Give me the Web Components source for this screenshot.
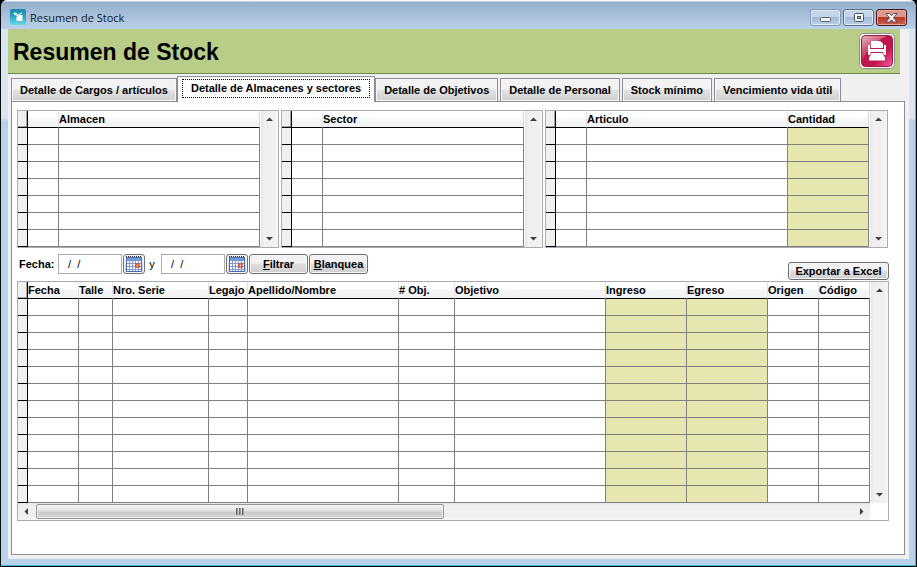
<!DOCTYPE html>
<html lang="es">
<head>
<meta charset="utf-8">
<title>Resumen de Stock</title>
<style>
  body { margin: 0; background: #000; font: 11px/13px "Liberation Sans", Arial, sans-serif; color: #000; }
  .lists { display: grid; grid-template-columns: 262fr 262fr 343fr; gap: 2px; margin-right: 1px; }
</style>
</head>
<body>
<app-window caption="Resumen de Stock">
  <form-header>Resumen de Stock</form-header>
  <tab-strip active="1" tabs="Detalle de Cargos / artículos|Detalle de Almacenes y sectores|Detalle de Objetivos|Detalle de Personal|Stock mínimo|Vencimiento vida útil">
    <div class="lists">
      <data-grid label="Almacenes" rows="7" columns='[["",31],["Almacen",0]]'></data-grid>
      <data-grid label="Sectores" rows="7" columns='[["",31],["Sector",0]]'></data-grid>
      <data-grid label="Artículos" rows="7" columns='[["",31],["Articulo",0],["Cantidad",81,1]]'></data-grid>
    </div>
    <filter-bar></filter-bar>
    <data-grid label="Movimientos" rows="12" hscroll columns='[["Fecha",51],["Talle",34],["Nro. Serie",96],["Legajo",39],["Apellido/Nombre",151],["# Obj.",56],["Objetivo",0],["Ingreso",81,1],["Egreso",81,1],["Origen",51],["Código",51]]'></data-grid>
  </tab-strip>
</app-window>

<script>
class BaseElement extends HTMLElement {
  connectedCallback() {
    if (this.shadowRoot) return;
    this.attachShadow({ mode: "open" }).innerHTML =
      "<style>*{box-sizing:border-box}button{font:inherit;color:inherit;margin:0;padding:0}</style>" + this.render();
  }
}

customElements.define("app-window", class extends BaseElement {
  render() {
    return `<style>
      :host { display: flex; flex-direction: column; box-sizing: border-box; min-height: 100vh;
        border: solid #0b0b0d; border-width: 0 1px 1px; border-radius: 7px 7px 0 0; overflow: hidden;
        background: linear-gradient(#d9e6f4 0 118px, #b9d1ea 121px); }
      .inner { flex: 1; display: flex; flex-direction: column; border: solid #35bfdc; border-width: 0 1px 1px 0; }
      .bar { height: 29px; display: flex; align-items: center; padding: 1px 8px 0 9px;
        background: linear-gradient(#f4f8fc 0 1px, #93adca 2px, #a3bbd7 12px, #b9d1ea); }
      .bar svg.logo { width: 16px; height: 16px; margin-top: 4px; }
      .cap { flex: 1; margin: 5px 0 0 4px; font: 11px/16px "Open Sans", "Noto Sans", sans-serif; color: #101820; }
      .ctl { display: flex; gap: 2px; margin-top: 5px; }
      .ctl button { width: 31px; height: 17px; display: grid; place-items: center; border: 1px solid #5c6f88; border-radius: 3px;
        background: linear-gradient(#c3d5e9 0 45%, #a3bbd6 50%, #b9d0e8); box-shadow: inset 0 0 0 1px #dfeaf6; }
      .ctl button.min { border-color: #8499b3; }
      .ctl button.min svg { margin-top: 3px; }
      .ctl button.close { border-color: #4b1b22; box-shadow: inset 0 0 0 1px #e3a59c;
        background: linear-gradient(#dc9a8c 0 45%, #b93a26 50%, #c9604a); }
      .body { flex: 1; display: flex; flex-direction: column; margin: 0 6px 6px 7px; background: #f0f0f0; }
    </style>
    <div class="inner">
      <div class="bar">
        <svg class="logo" viewBox="0 0 16 16" aria-hidden="true">
          <defs><linearGradient id="g" x2="0" y2="1"><stop stop-color="#1d87a8"/><stop offset=".5" stop-color="#25a7c5"/><stop offset="1" stop-color="#6fdbe5"/></linearGradient></defs>
          <rect width="16" height="16" rx="2" fill="url(#g)"/>
          <path d="M3 4 6 3.500 8 6h4.500v6H6.500V7.500Z" fill="#fff"/><path d="M8.500 5.500 12 4" stroke="#fff"/><path d="m5.500 6 2 2" stroke="#25a7c5"/>
        </svg>
        <span class="cap">${this.getAttribute("caption")}</span>
        <div class="ctl">
          <button class="min" aria-label="Minimizar"><svg width="13" height="7"><rect x="1.500" y="1.500" width="10" height="4" rx="1" fill="#f4f4f4" stroke="#5c6270"/></svg></button>
          <button aria-label="Maximizar"><svg width="12" height="10"><rect x="1.500" y=".5" width="9" height="8" rx="1" fill="#f7f7f7" stroke="#4d5360"/><rect x="4.500" y="3.500" width="3" height="2" fill="#a7bfda" stroke="#4d5360"/></svg></button>
          <button class="close" aria-label="Cerrar"><svg width="13" height="10"><path d="M1 .5h3.500l2 2.200 2-2.200H12L8.500 4.800 12 9H8.500l-2-2.200-2 2.200H1l3.500-4.200Z" fill="#fafafa" stroke="#53525c"/></svg></button>
        </div>
      </div>
      <div class="body"><slot></slot></div>
    </div>`;
  }
});

customElements.define("form-header", class extends BaseElement {
  render() {
    return `<style>
      :host { display: flex; align-items: center; box-sizing: border-box; height: 45px; margin-right: 9px; padding: 0 5px;
        background: #b8cd87; border-bottom: 1px solid #6f8b42; }
      h1 { flex: 1; margin: 0; padding-top: 2px; font: bold 23px/28px "Liberation Sans", Arial, sans-serif; }
      button { width: 36px; height: 36px; border: 0; background: none; }
      svg { display: block; }
    </style>
    <h1><slot></slot></h1>
    <button aria-label="Imprimir"><svg width="36" height="36" viewBox="0 0 36 36">
      <defs>
        <linearGradient id="p" x2="1" y2="1"><stop stop-color="#c96a83"/><stop offset=".3" stop-color="#bd1746"/><stop offset=".65" stop-color="#c4144e"/><stop offset="1" stop-color="#ef62a0"/></linearGradient>
        <linearGradient id="s" x2=".4" y2="1"><stop stop-color="#fff" stop-opacity=".5"/><stop offset="1" stop-color="#fff" stop-opacity=".05"/></linearGradient>
      </defs>
      <rect x=".5" y=".5" width="35" height="35" rx="4" fill="#fff" stroke="#8c8c8c"/>
      <rect x="2.500" y="2.500" width="31" height="31" rx="4" fill="url(#p)" stroke="#9d1640"/>
      <path d="M3 28V7q0-4 4-4h21Q12 9 3 28Z" fill="url(#s)"/>
      <path d="M12 8h9l3 2.500V15H12Z" fill="#fff"/>
      <path d="M9 12h2v4h14v-4h2v10h-2l-1-3H12l-1 3H9Z" fill="#fff"/>
      <path d="M12.500 20h11l2.500 5v2.500H10V25Z" fill="#fff"/>
    </svg></button>`;
  }
});

customElements.define("tab-strip", class extends BaseElement {
  render() {
    const active = +this.getAttribute("active");
    const tabs = this.getAttribute("tabs").split("|").map((t, i) =>
      `<button role="tab" aria-selected="${i === active}"><span>${t}</span></button>`).join("");
    return `<style>
      :host { flex: 1; display: flex; flex-direction: column; margin: 2px 4px 4px 3px; }
      .tabs { display: flex; align-items: flex-end; gap: 2px; height: 26px; margin-bottom: -1px; font-weight: bold; }
      button { height: 24px; padding: 0 8px; border: 1px solid #8b8d9b; white-space: nowrap;
        background: linear-gradient(#f3f3f3 0 45%, #e3e3e3 50%, #cfcfcf); box-shadow: inset 0 0 0 1px #f6f6f6; }
      button[aria-selected=true] { height: 26px; margin: 0 -2px; padding: 0 4px 3px; border-bottom: 0; background: #fff; box-shadow: none; position: relative; }
      [aria-selected=true] span { display: block; padding: 2px 8px; border: 1px dotted #000; }
      .page { flex: 1; padding: 8px 15px 8px 5px; border: 1px solid #8b8d9b; background: #fff; }
    </style>
    <div class="tabs" role="tablist">${tabs}</div>
    <div class="page" role="tabpanel"><slot></slot></div>`;
  }
});

customElements.define("scroll-bar", class extends BaseElement {
  render() {
    const h = this.hasAttribute("horizontal");
    const arrow = d => `<svg width="7" height="7" viewBox="0 0 7 7"><path d="${d}" fill="#404040"/></svg>`;
    return `<style>
      :host { display: flex; box-sizing: border-box; flex-direction: ${h ? "row" : "column"}; ${h ? "height" : "width"}: 17px;
        background: linear-gradient(${h ? "180deg" : "90deg"}, #e5e5e5, #f0f0f0 3px 13px, #f7f7f7); }
      button { flex: none; width: 17px; height: 17px; display: grid; place-items: center; border: 0; background: none; }
      .track { flex: 1; display: flex; padding: 1px; }
      .thumb { width: 50%; display: flex; gap: 1px; align-items: center; justify-content: center; border: 1px solid #979797; border-radius: 2px;
        background: linear-gradient(#f3f3f3, #e2e2e2 48%, #c9c9c9 52%, #d6d6d6); box-shadow: inset 0 0 0 1px #f0f0f0; }
      i { width: 2px; height: 7px; background: linear-gradient(90deg, #555, #aaa); }
    </style>
    <button aria-label="${h ? "Izquierda" : "Arriba"}">${arrow(h ? "M5 0v7L1.500 3.500Z" : "M0 5h7L3.500 1.500Z")}</button>
    <div class="track">${h ? '<div class="thumb"><i></i><i></i><i></i></div>' : ""}</div>
    <button aria-label="${h ? "Derecha" : "Abajo"}">${arrow(h ? "M2 0v7l3.500-3.500Z" : "M0 2h7L3.500 5.500Z")}</button>`;
  }
});

customElements.define("data-grid", class extends BaseElement {
  render() {
    const cols = JSON.parse(this.getAttribute("columns"));
    const rows = +this.getAttribute("rows");
    const row = `<tr><td class="mark"></td>${cols.map(c => `<td${c[2] ? ' class="tint"' : ""}></td>`).join("")}</tr>`;
    return `<style>
      :host { display: block; min-width: 0; border: 1px solid #a9aab2; background: #fff; }
      .main { display: grid; grid-template-columns: minmax(0, 1fr) 17px; column-gap: 1px; }
      table { width: 100%; table-layout: fixed; border-collapse: separate; border-spacing: 0; }
      th, td { height: 17px; padding: 0; border: solid #808080; border-width: 0 1px 1px 0; }
      th { text-align: left; font-weight: bold; line-height: 16px; white-space: nowrap; border-color: #e2e4e8; border-bottom-color: #000;
        background: linear-gradient(#fff 0 40%, #f5f6f8 50%, #f1f2f4); }
      th:last-child { border-right-color: #d5d6da; }
      td.mark { background: #f0f0f0; border-color: #000; }
      th.mark { background: #f0f0f0; border-color: #000; box-shadow: inset -1px -1px #a5a5a5; }
      td.tint { background: #e6e6b0; }
    </style>
    <div class="main">
      <table aria-label="${this.getAttribute("label")}">
        <colgroup><col style="width:10px">${cols.map(c => `<col${c[1] ? ` style="width:${c[1]}px"` : ""}>`).join("")}</colgroup>
        <thead><tr><th class="mark"></th>${cols.map(c => `<th>${c[0]}</th>`).join("")}</tr></thead>
        <tbody>${row.repeat(rows)}</tbody>
      </table>
      <scroll-bar></scroll-bar>
      ${this.hasAttribute("hscroll") ? "<scroll-bar horizontal></scroll-bar>" : ""}
    </div>`;
  }
});

customElements.define("filter-bar", class extends BaseElement {
  render() {
    const cal = `<svg width="18" height="18" viewBox="0 0 18 18">
      <rect x="1" y="3" width="16" height="14" fill="#fff"/>
      <path d="M1 3h16v3H1Z" fill="#6f9ae0"/>
      <path d="M1 1.500h16" stroke="#20252f" stroke-dasharray="1 1"/><path d="M1 2.500h16" stroke="#5a6f98"/>
      <path d="M2 8.500h14M2 11.500h14M2 14.500h14M4.500 6v10M7.500 6v10M10.500 6v10M13.500 6v10" stroke="#7f9bd0"/>
      <path d="M1.500 3v13.500h15V3" fill="none" stroke="#4668ae"/>
      <rect x="11" y="9" width="3" height="3" fill="#fff" stroke="#e0491c" stroke-width="1.500"/></svg>`;
    return `<style>
      :host { display: flex; height: 33px; justify-content: space-between; box-sizing: border-box; }
      .filters { display: flex; align-items: center; height: 20px; margin: 6px 0 0 2px; }
      label { font-weight: bold; width: 39px; }
      label.and { width: 16px; font-weight: normal; text-align: center; padding-right: 2px; }
      input { width: 64px; height: 20px; padding: 0 3px; border: 1px solid #a9aab2; font: inherit; background: #fff; border-radius: 0; outline: 0; }
      button { height: 20px; border: 1px solid #707070; border-radius: 3px; font-weight: bold;
        background: linear-gradient(#f2f2f2 0 45%, #dedede 50%, #cfcfcf); box-shadow: inset 0 0 0 1px #f6f6f6; }
      .cal { width: 22px; margin-left: 1px; display: grid; place-items: center; }
      .cmd { width: 59px; margin-left: 1px; }
      .export { width: 101px; height: 18px; margin-top: 14px; line-height: 16px; white-space: nowrap; }
    </style>
    <div class="filters">
      <label for="from">Fecha:</label><input id="from" value="  /  /"><button class="cal" aria-label="Calendario desde">${cal}</button>
      <label class="and" for="to">y</label><input id="to" value="  /  /"><button class="cal" aria-label="Calendario hasta">${cal}</button>
      <button class="cmd"><u>F</u>iltrar</button><button class="cmd"><u>B</u>lanquea</button>
    </div>
    <button class="export">Exportar a Excel</button>`;
  }
});
</script>
</body>
</html>
